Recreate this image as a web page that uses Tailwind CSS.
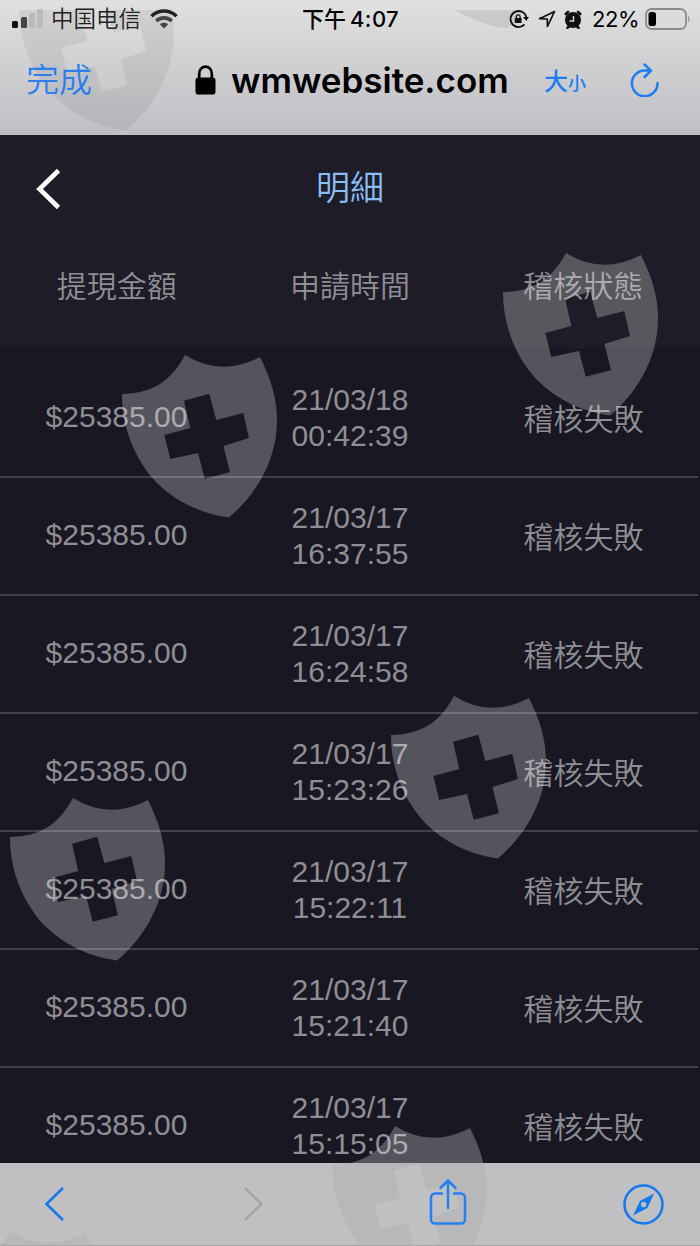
<!DOCTYPE html>
<html lang="zh-Hant">
<head>
  <meta charset="UTF-8">
  <meta name="viewport" content="width=device-width, initial-scale=1.0">
  <title>明細</title>
  <script src="https://cdn.jsdelivr.net/npm/@tailwindcss/browser@4"></script>
</head>
<body class="relative w-[700px] h-[1246px] overflow-hidden bg-[#191721] font-['Liberation_Sans','Noto_Sans_CJK_TC',sans-serif]">

  <svg class="hidden">
    <symbol id="shield" viewBox="0 0 156 165">
      <path fill-rule="evenodd" d="M0 40C15 40 30 36 41 28C51 20 57 12 63 1Q99.500 23.500 138 3C149 25 155 45 155 66C155 102 138 137 107 163.500C80 160 54 148 34 128C12 104 0 73 0 40ZM62 46.700L87.300 39.700L94.300 66L121.300 59L127 84L101.500 92L108 118.300L82.700 124.700L76 99L48.300 105L42.300 81L68.300 74Z"/>
    </symbol>
  </svg>

  <div class="flex flex-col h-full">

    <!-- status bar + address bar -->
    <header class="relative h-[135px] shrink-0 overflow-hidden bg-linear-to-b from-[#e0e0e0] to-[#bfbfc4]">
      <svg class="absolute left-[19px] top-[-33px] w-[156px] h-[165px] text-black/6" fill="currentColor"><use href="#shield"/></svg>
      <svg class="absolute left-[400px] top-[-135px] w-[156px] h-[165px] text-black/8" fill="currentColor"><use href="#shield"/></svg>
      <div class="absolute inset-x-0 top-0 h-[10px] bg-[#dfdfdf]"></div>

      <div class="relative grid grid-cols-[1fr_auto_1fr] items-center h-[38px] pl-3 pr-[9px] text-black">
        <div class="flex items-center">
          <svg class="w-[32px] h-[20px]" viewBox="0 0 32 20">
            <rect x="0" y="12" width="6" height="7" rx="1.500" fill="#111"/>
            <rect x="9" y="8" width="6" height="11" rx="1.500" fill="#444"/>
            <rect x="17" y="4" width="6" height="15" rx="1.500" fill="#bababa"/>
            <rect x="25" y="0" width="6" height="19" rx="1.500" fill="#bababa"/>
          </svg>
          <span class="ml-[7px] mb-[3px] text-[22.500px] leading-none text-[#222] font-['Noto_Sans_CJK_SC',sans-serif] font-[350]">中国电信</span>
          <svg class="ml-[9px] w-[28px] h-[20px]" viewBox="0 0 28 20" fill="none" stroke="#222" stroke-width="3.600">
            <path d="M1.500 7.200C8.500 .3 19.500 .3 26.500 7.200"/>
            <path d="M6.200 12C10.500 7.800 17.500 7.800 21.800 12" stroke="#444"/>
            <path d="M14 19.500L9.800 15.300C12.200 13.300 15.800 13.300 18.200 15.300Z" fill="#444" stroke="none"/>
          </svg>
        </div>
        <div class="flex items-center mr-[2px] text-[22px] leading-none font-medium font-[Inter,'Noto_Sans_CJK_SC',sans-serif]"><span class="mr-[4px]">下午</span><span class="tracking-[0.400px]">4:07</span></div>
        <div class="flex items-center justify-end">
          <svg class="w-[20px] h-[20px]" viewBox="0 0 20 20" fill="none" stroke="#111" stroke-width="1.800">
            <path d="M17.300 8A8 8 0 1 0 15.500 15.400"/>
            <path d="M14 8H20L17.300 12Z" fill="#111" stroke="none"/>
            <rect x="5.800" y="9" width="6.800" height="5" fill="#111" stroke="none"/>
            <path d="M7.300 9V7.700A1.900 1.900 0 0 1 11.100 7.700V9" stroke-width="1.300"/>
          </svg>
          <svg class="ml-[9px] w-[18px] h-[18px]" viewBox="0 0 18 18" fill="none" stroke="#111" stroke-width="1.700" stroke-linejoin="round">
            <path d="M16.500 1.500L1.500 8.700L9.300 9L9.500 16.500Z"/>
          </svg>
          <svg class="ml-[8px] w-[18px] h-[19px]" viewBox="0 0 18 19">
            <circle cx="9" cy="10" r="8" fill="#111"/>
            <path d="M1.800 4L4 1.800M16.200 4L14 1.800M3.500 17.800L5 16.500M14.500 17.800L13 16.500" stroke="#111" stroke-width="2.600" stroke-linecap="round"/>
            <path d="M9.500 6V11H5.500" stroke="#ddd" stroke-width="1.400" fill="none"/>
          </svg>
          <span class="ml-[10px] text-[22px] leading-none tracking-[-0.500px] font-[Inter,sans-serif]">22%</span>
          <svg class="ml-[6px] w-[46px] h-[22px]" viewBox="0 0 46 22">
            <rect x="1" y="1" width="40" height="20" rx="5.500" fill="none" stroke="#8b8b8b" stroke-width="1.800"/>
            <rect x="3.500" y="4" width="7.500" height="14" rx="2.500" fill="#000"/>
            <path d="M43 7.500Q46 11 43 14.500Z" fill="#999"/>
          </svg>
        </div>
      </div>

      <div class="relative flex items-center h-[84px] pl-[26px] pr-[40px]">
        <span class="w-[169px] shrink-0 mb-[4px] text-[33px] leading-none text-[#2d7ff0] font-['Noto_Sans_CJK_SC',sans-serif] font-[350]">完成</span>
        <svg class="w-[21px] h-[30px] shrink-0" viewBox="0 0 21 30">
          <rect x="0.500" y="12.500" width="20" height="17" rx="2.800" fill="#000"/>
          <path d="M4.200 14V8.500A6.300 6.800 0 0 1 16.800 8.500V14" fill="none" stroke="#000" stroke-width="2.700"/>
        </svg>
        <span class="ml-[15px] w-[313px] shrink-0 text-[35px] leading-none text-black font-semibold font-[Inter,sans-serif]">wmwebsite.com</span>
        <span class="flex items-baseline w-[86px] shrink-0 text-[#1a7df0] font-['Noto_Sans_CJK_SC',sans-serif] font-medium leading-none"><span class="text-[24px]">大</span><span class="text-[18px]">小</span></span>
        <svg class="w-[30px] h-[34px] shrink-0" viewBox="0 0 30 34" fill="none" stroke="#1a7df0" stroke-width="2.500" stroke-linecap="round" stroke-linejoin="round">
          <path d="M20 7.600H14.500A12.800 12.800 0 1 0 27.500 20.300"/>
          <path d="M14.500 1.500L21 7.600L14.500 14"/>
        </svg>
      </div>
    </header>

    <!-- page -->
    <main class="flex-1 min-h-0 overflow-hidden text-[#8f8e94] text-[30px]">
      <div class="bg-[#1e1c26] h-[213px]">
        <div class="grid grid-cols-[100px_1fr_100px] items-center h-[106px]">
          <svg class="ml-[35px] mt-[2px] w-[26px] h-[42px]" viewBox="0 0 26 42" fill="none" stroke="#fff" stroke-width="4.600">
            <path d="M23.500 2.500L4.500 21L23.500 39.500"/>
          </svg>
          <h1 class="text-center text-[34px] leading-none text-[#8abcf5] font-[350]">明細</h1>
        </div>
        <div class="grid grid-cols-3 items-center h-[86px] text-center leading-none font-['Noto_Sans_CJK_TC',sans-serif] font-[350]">
          <span>提現金額</span>
          <span>申請時間</span>
          <span>稽核狀態</span>
        </div>
      </div>
      <div id="rows" class="pt-[12px] mr-[2px]"></div>
    </main>

    <!-- toolbar -->
    <footer class="relative flex items-center h-[83px] shrink-0 overflow-hidden bg-[#c0c0c3] border-b border-[#a5a5a8] pl-[44px]">
      <svg class="absolute left-[332px] top-[-39px] w-[156px] h-[165px] text-black/4" fill="currentColor"><use href="#shield"/></svg>
      <svg class="absolute left-[-53px] top-[67px] w-[156px] h-[165px] text-black/4" fill="currentColor"><use href="#shield"/></svg>
      <svg class="relative w-[22px] h-[36px]" viewBox="0 0 22 36" fill="none" stroke="#1478ee" stroke-width="2.600"><path d="M19 2L2.500 18L19 34"/></svg>
      <svg class="relative ml-[177px] w-[22px] h-[36px]" viewBox="0 0 22 36" fill="none" stroke="#a3a3a5" stroke-width="2.200"><path d="M2 2L18.500 18L2 34"/></svg>
      <svg class="relative ml-[164px] w-[38px] h-[48px] mb-[4px]" viewBox="0 0 38 48" fill="none" stroke="#2680ec" stroke-width="2.500" stroke-linecap="round" stroke-linejoin="round">
        <path d="M13 15.500H6A4 4 0 0 0 2 19.500V41.500A4 4 0 0 0 6 45.500H32A4 4 0 0 0 36 41.500V19.500A4 4 0 0 0 32 15.500H25"/>
        <path d="M19 30V2.500M11.500 10L19 2.500L26.500 10"/>
      </svg>
      <svg class="relative ml-[156px] w-[41px] h-[41px]" viewBox="0 0 41 41">
        <circle cx="20.500" cy="20.500" r="19" fill="none" stroke="#1478ee" stroke-width="2.500"/>
        <path fill-rule="evenodd" fill="#1478ee" d="M31 9.500L24.500 24L10 31.500L17 17ZM20.700 17.800A2.700 2.700 0 1 0 20.700 23.200A2.700 2.700 0 1 0 20.700 17.800Z"/>
      </svg>
    </footer>
  </div>

  <!-- watermark over the page area -->
  <div class="absolute inset-x-0 top-[135px] h-[1028px] overflow-hidden pointer-events-none text-white/26">
    <svg class="absolute left-[503px] top-[117px] w-[156px] h-[165px]" fill="currentColor"><use href="#shield"/></svg>
    <svg class="absolute left-[122px] top-[219px] w-[156px] h-[165px]" fill="currentColor"><use href="#shield"/></svg>
    <svg class="absolute left-[391px] top-[560px] w-[156px] h-[165px]" fill="currentColor"><use href="#shield"/></svg>
    <svg class="absolute left-[10px] top-[662px] w-[156px] h-[165px]" fill="currentColor"><use href="#shield"/></svg>
    <svg class="absolute left-[332px] top-[990px] w-[156px] h-[165px]" fill="currentColor"><use href="#shield"/></svg>
  </div>

  <script>
    const records = [
      ['21/03/18', '00:42:39'],
      ['21/03/17', '16:37:55'],
      ['21/03/17', '16:24:58'],
      ['21/03/17', '15:23:26'],
      ['21/03/17', '15:22:11'],
      ['21/03/17', '15:21:40'],
      ['21/03/17', '15:15:05']
    ];

    document.getElementById('rows').innerHTML = records.map(([date, time]) => `
      <div class="grid grid-cols-[233px_234px_233px] items-center h-[118px] border-b-2 border-[#414048] text-center">
        <span class="mb-[3px]">$25385.00</span>
        <span class="leading-[36.500px]">${date}<br>${time}</span>
        <span class="mb-[3px] leading-none font-['Noto_Sans_CJK_TC',sans-serif] font-[350]">稽核失敗</span>
      </div>
    `).join('');
  </script>
</body>
</html>
